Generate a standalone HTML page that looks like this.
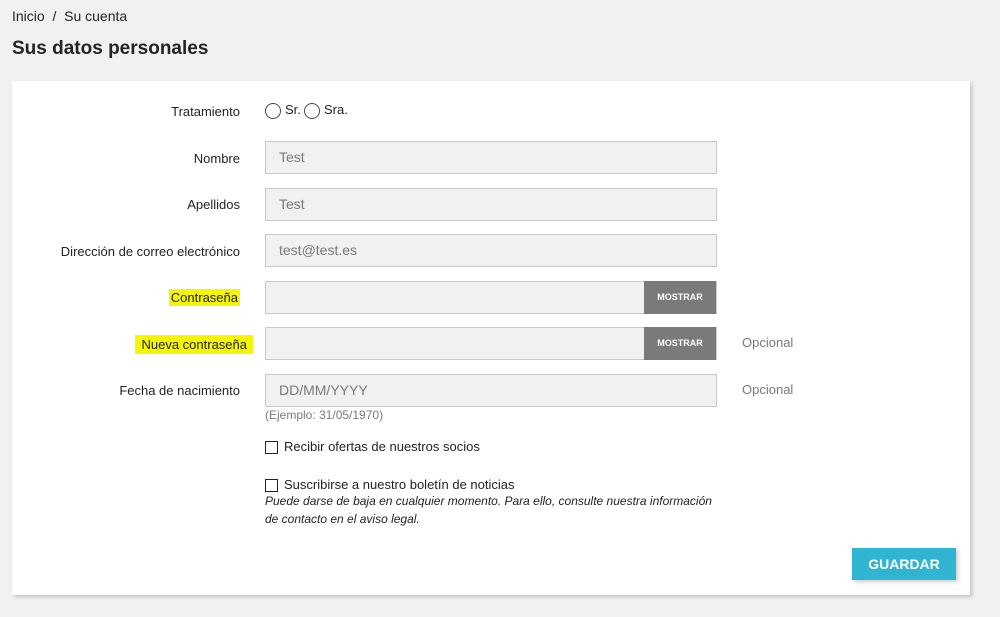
<!DOCTYPE html>
<html><head><meta charset="utf-8"><style>
body{margin:0;width:1000px;height:617px;background:#f1f1f1;font-family:"Liberation Sans",sans-serif;color:#232323;position:relative;overflow:hidden}
.a{position:absolute}
.card{left:12px;top:81px;width:958px;height:514px;background:#fff;box-shadow:2px 2px 4px rgba(0,0,0,.2)}
.lbl{font-size:13px;color:#232323;text-align:right;width:240px;left:0}
.in{left:265px;width:450px;height:31px;background:#f1f1f1;border:1px solid #c8c8c8;color:#7a7a7a;font-size:14px;line-height:31px;text-indent:13px}
.btn{left:644px;width:72px;height:33px;background:#7a7a7a;color:#fff;font-size:9px;font-weight:bold;text-align:center;line-height:33px}
.opt{left:742px;font-size:13px;color:#7a7a7a}
.hl{background:#f6f600;padding:1px 2px}
.cb{width:11px;height:11px;border:1.5px solid #232323;left:265px}
.rd{width:14px;height:14px;border:1.5px solid #444;border-radius:50%}
</style></head><body>
<div class="a" style="left:12px;top:8px;font-size:14px">Inicio &nbsp;/&nbsp; Su cuenta</div>
<div class="a" style="left:12px;top:38px;font-size:19px;font-weight:bold">Sus datos personales</div>
<div class="a card"></div>
<div class="a lbl" style="top:104px">Tratamiento</div>
<div class="a rd" style="left:265px;top:103px"></div><div class="a" style="left:285px;top:102px;font-size:13px">Sr.</div>
<div class="a rd" style="left:304px;top:103px"></div><div class="a" style="left:324px;top:102px;font-size:13px">Sra.</div>
<div class="a lbl" style="top:151px">Nombre</div><div class="a in" style="top:141px">Test</div>
<div class="a lbl" style="top:197px">Apellidos</div><div class="a in" style="top:188px">Test</div>
<div class="a lbl" style="top:244px">Dirección de correo electrónico</div><div class="a in" style="top:234px">test@test.es</div>
<div class="a lbl" style="top:290px"><span class="hl">Contraseña</span></div><div class="a in" style="top:281px"></div><div class="a btn" style="top:281px">MOSTRAR</div>
<div class="a lbl" style="top:337px;width:253px"><span class="hl" style="padding:2px 6px">Nueva contraseña </span></div><div class="a in" style="top:327px"></div><div class="a btn" style="top:327px">MOSTRAR</div>
<div class="a opt" style="top:335px">Opcional</div>
<div class="a lbl" style="top:383px">Fecha de nacimiento</div><div class="a in" style="top:374px">DD/MM/YYYY</div>
<div class="a opt" style="top:382px">Opcional</div>
<div class="a" style="left:265px;top:408px;font-size:12px;color:#7a7a7a">(Ejemplo: 31/05/1970)</div>
<div class="a cb" style="top:441px"></div><div class="a" style="left:284px;top:439px;font-size:13px">Recibir ofertas de nuestros socios</div>
<div class="a cb" style="top:479px"></div><div class="a" style="left:284px;top:477px;font-size:13px">Suscribirse a nuestro boletín de noticias</div>
<div class="a" style="left:265px;top:492px;width:460px;font-size:12px;font-style:italic;line-height:18px">Puede darse de baja en cualquier momento. Para ello, consulte nuestra información de contacto en el aviso legal.</div>
<div class="a" style="left:852px;top:548px;width:104px;height:32px;background:#2fb5d2;color:#fff;font-weight:bold;font-size:14px;text-align:center;line-height:32px;box-shadow:2px 2px 4px rgba(0,0,0,.2)">GUARDAR</div>
</body></html>
